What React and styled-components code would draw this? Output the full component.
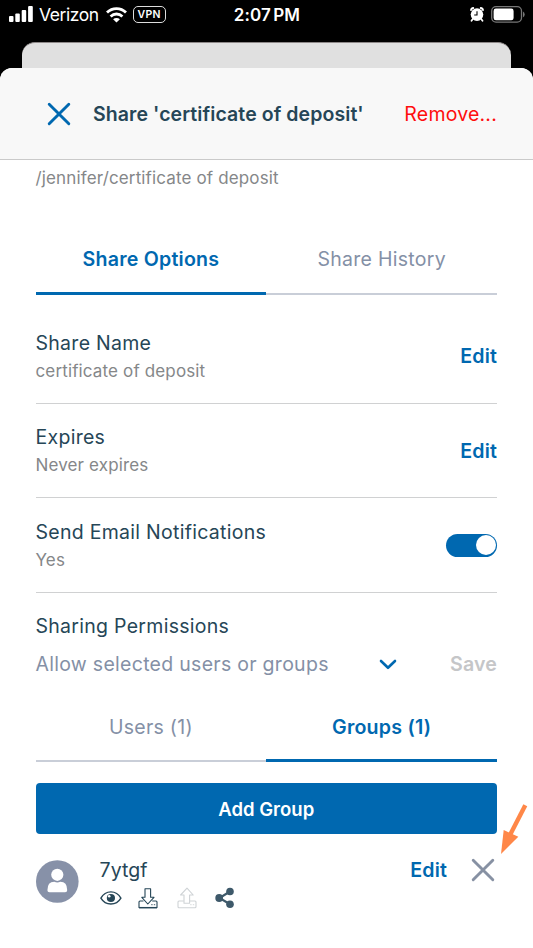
import React from 'react';
import styled, { createGlobalStyle } from 'styled-components';

const BLUE = '#0068b0';
const NAVY = '#264657';
const SLATE = '#8490a6';
const GRAY = '#858789';

const Global = createGlobalStyle`
  * { box-sizing: border-box; }
  body { margin: 0; background: #000; font-family: Inter, sans-serif; }
  button { border: 0; background: none; padding: 0; font: inherit; }
  svg { display: block; flex: none; }
`;

const Phone = styled.div`
  width: 533px; height: 948px; overflow: hidden;
  display: flex; flex-direction: column; background: #000;
`;
const StatusBar = styled.header`
  height: 42px; flex: none; padding: 0 8px 0 9px; color: #fff;
  display: grid; grid-template-columns: 1fr auto 1fr; align-items: start;
`;
const StatusGroup = styled.div`
  display: flex; align-items: center; height: 29px;
  gap: ${(p) => (p.$end ? '7px' : '0')};
  justify-content: ${(p) => (p.$end ? 'flex-end' : 'flex-start')};
`;
const Carrier = styled.span`
  font-size: 17.5px; line-height: 29px; margin: 0 7px 0 6px; letter-spacing: -0.45px;
`;
const Clock = styled.time`
  font-size: 17px; font-weight: 600; line-height: 30px; letter-spacing: 0.1px; word-spacing: -2px;
`;
const Vpn = styled.span`
  width: 33px; height: 17px; margin-left: 6px; border: 1.5px solid #ddd; border-radius: 5px;
  font-size: 10.5px; font-weight: 600; line-height: 15px; text-align: center; letter-spacing: 0.3px;
`;
const BackCard = styled.div`
  height: 26px; flex: none; margin: 0 22px; background: #e0e0e0;
  border-radius: 13px 13px 0 0; border-top: 1px solid #8d8888;
`;
const SheetWrap = styled.div`
  flex: 1; background: #fff; border-radius: 12px 12px 0 0; overflow: hidden;
`;
const SheetHeader = styled.div`
  height: 92px; padding: 0 36px 0 46.5px; background: #f8f8f8; border-bottom: 1px solid #cacaca;
  display: flex; align-items: center;
`;
const Text = styled.span`
  display: block; white-space: nowrap;
  font-size: ${(p) => p.$size || 19.5}px;
  font-weight: ${(p) => p.$weight || 400};
  line-height: 28px;
  letter-spacing: ${(p) => p.$track ?? 0.28}px;
  color: ${(p) => p.$color || NAVY};
`;
const Title = styled(Text)` margin-left: 22.5px; flex: 1; `;
const Content = styled.main` padding: 0 36px 0 35.5px; `;
const Path = styled.div` height: 65px; padding-top: 3.5px; `;
const Tabs = styled.div`
  display: grid; grid-template-columns: 1fr 1fr; height: ${(p) => p.$height}px;
`;
const Tab = styled.button`
  display: flex; justify-content: center; align-items: flex-start;
  padding-top: ${(p) => p.$top}px;
  border-bottom: ${(p) => (p.$active ? `3px solid ${BLUE}` : '2px solid #c9ced8')};
`;
const Row = styled.section`
  display: flex; align-items: center; justify-content: space-between;
  height: ${(p) => p.$height}px; padding-top: ${(p) => p.$top || 0}px; border-bottom: 1px solid #d0d1d2;
`;
const RowText = styled.div` padding-top: 1px; `;
const Switch = styled.button`
  width: 51px; height: 23px; border-radius: 12px; background: ${BLUE};
  display: flex; align-items: center; justify-content: flex-end; padding: 1px;
`;
const Knob = styled.span` width: 20.5px; height: 20.5px; border-radius: 50%; background: #fff; `;
const Permissions = styled.section` height: 111px; padding-top: 19px; `;
const SelectRow = styled.div`
  display: grid; grid-template-columns: 343px 1fr auto; align-items: center; margin-top: 10px;
`;
const AddButton = styled.button`
  display: flex; justify-content: center; align-items: center;
  width: 100%; height: 51px; margin-top: 21px; border-radius: 4px; background: ${BLUE};
`;
const GroupRow = styled.div`
  display: grid; grid-template-columns: 64px 1fr auto 24px; padding-top: 22px; align-items: start;
`;
const Avatar = styled.div` padding-top: 4px; `;
const Icons = styled.div` display: flex; height: 26px; align-items: center; margin-top: 0.5px; `;
const IconSlot = styled.span` width: 38.5px; `;
const EditSlot = styled.div` margin-right: 26px; `;
const RemoveArea = styled.div` position: relative; padding-top: 2px; margin-left: -2px; `;
const Pointer = styled.div` position: absolute; left: 27px; top: -53px; `;

const Cross = ({ color }) => (
  <svg width="24" height="24" viewBox="0 0 24 24" fill="none" stroke={color} strokeWidth="2.9" strokeLinecap="round">
    <path d="M2.2 2.2L21.8 21.8M21.8 2.2L2.2 21.8" />
  </svg>
);

const Signal = () => (
  <svg width="24" height="17" viewBox="0 0 24 17" fill="#fff">
    <rect x="0" y="10" width="4.5" height="6" rx="1" />
    <rect x="6.3" y="7.5" width="4.5" height="8.5" rx="1" />
    <rect x="12.7" y="4" width="4.5" height="12" rx="1" />
    <rect x="19.1" y="0" width="4.7" height="16" rx="1" />
  </svg>
);

const Wifi = () => (
  <svg width="21" height="16" viewBox="0 0 21 16" fill="none" stroke="#fff" strokeWidth="2.8">
    <path d="M1 5.6C6.3.3 14.7.3 20 5.6" />
    <path d="M4.6 9.4C8 6.2 13 6.2 16.4 9.4" />
    <path d="M10.5 15.6L7.1 12.2C9 10.5 12 10.5 13.9 12.2Z" fill="#fff" stroke="none" />
  </svg>
);

const Alarm = () => (
  <svg width="14" height="15" viewBox="0 0 14 15">
    <g fill="none" stroke="#fff" strokeWidth="1.8" strokeLinecap="round">
      <path d="M1 3.2Q1.2 1.2 3.3 1M10.7 1Q12.8 1.2 13 3.2M2.8 12L1.5 13.7M11.2 12L12.5 13.7" />
    </g>
    <circle cx="7" cy="7.6" r="6.3" fill="#fff" />
    <path d="M7 4.2V8H4.2" fill="none" stroke="#000" strokeWidth="1.1" />
  </svg>
);

const Battery = () => (
  <svg width="34" height="17" viewBox="0 0 34 17">
    <rect x=".7" y=".7" width="29.8" height="15.4" rx="4.3" fill="none" stroke="#777" strokeWidth="1.3" />
    <rect x="2.6" y="2.6" width="20" height="11.6" rx="2.3" fill="#fff" />
    <path d="M32 5.5Q33.7 6.5 33.7 8.4T32 11.3Z" fill="#777" />
  </svg>
);

const Person = () => (
  <svg width="43" height="43" viewBox="0 0 43 43">
    <circle cx="21.3" cy="21.5" r="21.3" fill="#8791a8" />
    <circle cx="21.3" cy="14.8" r="6.1" fill="#fff" />
    <path d="M11.4 30.2Q11.4 21.8 18.3 21.8Q21.3 23 24.3 21.8Q31.2 21.8 31.2 30.2Q31.2 32.3 29.1 32.3H13.5Q11.4 32.3 11.4 30.2Z" fill="#fff" />
  </svg>
);

const Eye = () => (
  <svg width="22" height="18" viewBox="0 0 22 18">
    <path d="M.9 9.2C5.6 .8 16.2 .8 20.9 9.2C16.2 17 5.6 17 .9 9.2Z" fill="none" stroke={NAVY} strokeWidth="1.4" />
    <circle cx="10.9" cy="9" r="4.1" fill={NAVY} />
    <circle cx="9.2" cy="7.2" r="1.3" fill="#fff" />
  </svg>
);

const Drive = ({ color, up }) => (
  <svg width="20" height="22" viewBox="0 0 20 22" fill="none" stroke={color} strokeWidth="1.1" strokeLinejoin="round">
    <path d={up ? 'M6.8 14H2Q1 14 1 15V19.5Q1 20.8 2 20.8H18Q19 20.8 19 19.5V15Q19 14 18 14H12.6' : 'M5.5 14H2Q1 14 1 15V20.5H19V15Q19 14 18 14H14.2'} />
    {!up && <path d="M1 20.7H19" strokeWidth="1.5" />}
    <path d={up ? 'M7 16.3V8H3.6L10 1.2L16.2 8H12.6V16.3Z' : 'M7 1.7H12.6V10.3H16L9.8 17L3.8 10.3H7Z'} />
    <path d="M13.2 17.6H14.6M15.8 17.6H17.2" strokeWidth="1.3" opacity="0.7" />
  </svg>
);

const Share = () => (
  <svg width="20" height="22" viewBox="0 0 20 22" fill="#3e596a">
    <path d="M15 4.5L4.5 11L15 17.3" fill="none" stroke="#3e596a" strokeWidth="2.2" />
    <circle cx="15" cy="4.5" r="3.8" /><circle cx="4.2" cy="11" r="3.9" /><circle cx="15" cy="17.3" r="3.8" />
  </svg>
);

const Option = ({ title, detail, height, top, children }) => (
  <Row $height={height} $top={top}>
    <RowText>
      <Text>{title}</Text>
      <Text $size={17} $track={0.14} $color={GRAY}>{detail}</Text>
    </RowText>
    {children}
  </Row>
);

const Action = ({ children, color = BLUE }) => (
  <Text as="button" $size={19.6} $weight={600} $track={0.15} $color={color}>{children}</Text>
);

export default function App() {
  return (
    <Phone>
      <Global />
      <StatusBar>
        <StatusGroup><Signal /><Carrier>Verizon</Carrier><Wifi /><Vpn>VPN</Vpn></StatusGroup>
        <Clock>2:07 PM</Clock>
        <StatusGroup $end><Alarm /><Battery /></StatusGroup>
      </StatusBar>
      <BackCard />
      <SheetWrap>
        <SheetHeader>
          <Cross color={BLUE} />
          <Title $weight={600} $track={0.08}>Share 'certificate of deposit'</Title>
          <Text $track={0.2} $color="#ff0d0d">Remove...</Text>
        </SheetHeader>
        <Content>
          <Path><Text $size={17} $track={0.14} $color={GRAY}>/jennifer/certificate of deposit</Text></Path>
          <Tabs $height={70}>
            <Tab $active $top={20}><Text $size={19.6} $weight={600} $track={0.22} $color={BLUE}>Share Options</Text></Tab>
            <Tab $top={20}><Text $color={SLATE}>Share History</Text></Tab>
          </Tabs>
          <Option title="Share Name" detail="certificate of deposit" height={109} top={14}><Action>Edit</Action></Option>
          <Option title="Expires" detail="Never expires" height={94}><Action>Edit</Action></Option>
          <Option title="Send Email Notifications" detail="Yes" height={95}><Switch aria-label="Send Email Notifications"><Knob /></Switch></Option>
          <Permissions>
            <Text>Sharing Permissions</Text>
            <SelectRow>
              <Text $color={SLATE}>Allow selected users or groups</Text>
              <svg width="18" height="11" viewBox="0 0 18 11" fill="none" stroke={BLUE} strokeWidth="2.6" strokeLinecap="round" strokeLinejoin="round"><path d="M2 2L9 8.8L16 2" /></svg>
              <Action color="#c5c6c8">Save</Action>
            </SelectRow>
          </Permissions>
          <Tabs $height={58}>
            <Tab $top={8.5}><Text $color={SLATE}>Users (1)</Text></Tab>
            <Tab $active $top={8.5}><Text $size={19.6} $weight={600} $track={0.22} $color={BLUE}>Groups (1)</Text></Tab>
          </Tabs>
          <AddButton><Text $size={18.5} $weight={600} $track={0} $color="#fff">Add Group</Text></AddButton>
          <GroupRow>
            <Avatar><Person /></Avatar>
            <div>
              <Text $track={0.1}>7ytgf</Text>
              <Icons>
                <IconSlot><Eye /></IconSlot>
                <IconSlot><Drive color={NAVY} /></IconSlot>
                <IconSlot><Drive color="#cfd3d6" up /></IconSlot>
                <IconSlot><Share /></IconSlot>
              </Icons>
            </div>
            <EditSlot><Action>Edit</Action></EditSlot>
            <RemoveArea>
              <Cross color="#8791a3" />
              <Pointer>
                <svg width="30" height="52" viewBox="0 0 30 52">
                  <path d="M27.3 2.3L12 32" stroke="#ff8748" strokeWidth="4.4" />
                  <path d="M3 51L5.7 27L20.3 33.7Z" fill="#ff8748" />
                </svg>
              </Pointer>
            </RemoveArea>
          </GroupRow>
        </Content>
      </SheetWrap>
    </Phone>
  );
}
